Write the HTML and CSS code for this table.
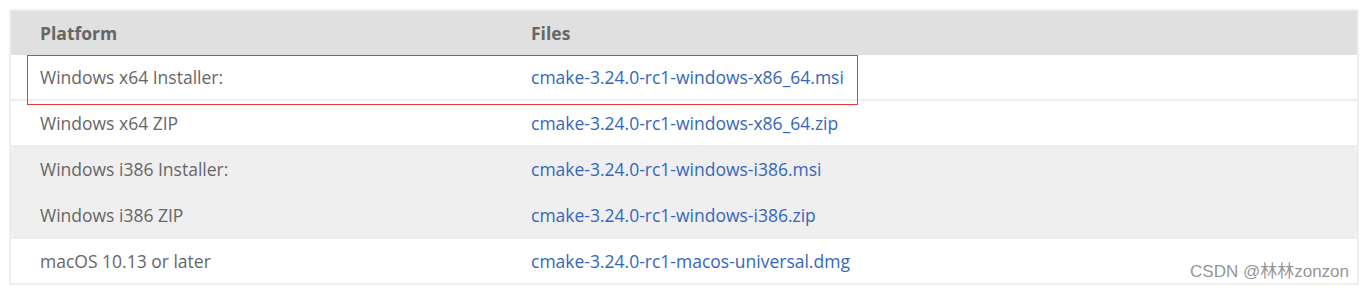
FILE: index.html
```html
<!DOCTYPE html>
<html lang="en">
<head>
<meta charset="utf-8">
<title>CMake downloads</title>
<link rel="stylesheet" href="styles.css">
</head>
<body>
<div class="page">
  <table class="files">
    <colgroup>
      <col class="col-platform">
      <col class="col-files">
    </colgroup>
    <thead>
      <tr>
        <th>Platform</th>
        <th>Files</th>
      </tr>
    </thead>
    <tbody>
      <tr>
        <td>Windows x64 Installer:</td>
        <td><a href="#">cmake-3.24.0-rc1-windows-x86_64.msi</a></td>
      </tr>
      <tr>
        <td>Windows x64 ZIP</td>
        <td><a href="#">cmake-3.24.0-rc1-windows-x86_64.zip</a></td>
      </tr>
      <tr class="alt">
        <td>Windows i386 Installer:</td>
        <td><a href="#">cmake-3.24.0-rc1-windows-i386.msi</a></td>
      </tr>
      <tr class="alt">
        <td>Windows i386 ZIP</td>
        <td><a href="#">cmake-3.24.0-rc1-windows-i386.zip</a></td>
      </tr>
      <tr>
        <td>macOS 10.13 or later</td>
        <td><a href="#">cmake-3.24.0-rc1-macos-universal.dmg</a></td>
      </tr>
    </tbody>
  </table>
  <div class="highlight"></div>
  <div class="watermark">CSDN @林林zonzon</div>
</div>
</body>
</html>
```

FILE: styles.css
```css
html, body {
  margin: 0;
  padding: 0;
  background: #ffffff;
}

.page {
  position: relative;
  padding: 9px 5px 0 9px;
  font-family: "Open Sans", "Liberation Sans", sans-serif;
  font-size: 17.5px;
  color: #666666;
}

.files {
  width: 1350px;
  border-collapse: separate;
  border-spacing: 0;
  table-layout: fixed;
  border: 2px solid #eeeeee;
  border-bottom: 0;
}

.col-platform { width: 491px; }

.files th,
.files td {
  text-align: left;
  padding: 0 29px;
  height: 44px;
  line-height: 22px;
  vertical-align: middle;
  white-space: nowrap;
}

.files th {
  background: #e0e0e0;
  font-weight: 700;
  color: #666666;
}

.files td {
  border-bottom: 2px solid #eeeeee;
}

.files tbody tr.alt td {
  background: #efefef;
}

.files a {
  color: #3566c0;
  text-decoration: none;
}

.highlight {
  position: absolute;
  left: 27px;
  top: 55px;
  width: 829px;
  height: 48px;
  border: 1px solid #e8393c;
  pointer-events: none;
}

.watermark {
  position: absolute;
  right: 15px;
  top: 262px;
  font-family: "Liberation Sans", "Noto Sans CJK SC", sans-serif;
  font-size: 17px;
  line-height: 20px;
  color: rgba(120, 120, 120, 0.8);
  white-space: nowrap;
}
```
